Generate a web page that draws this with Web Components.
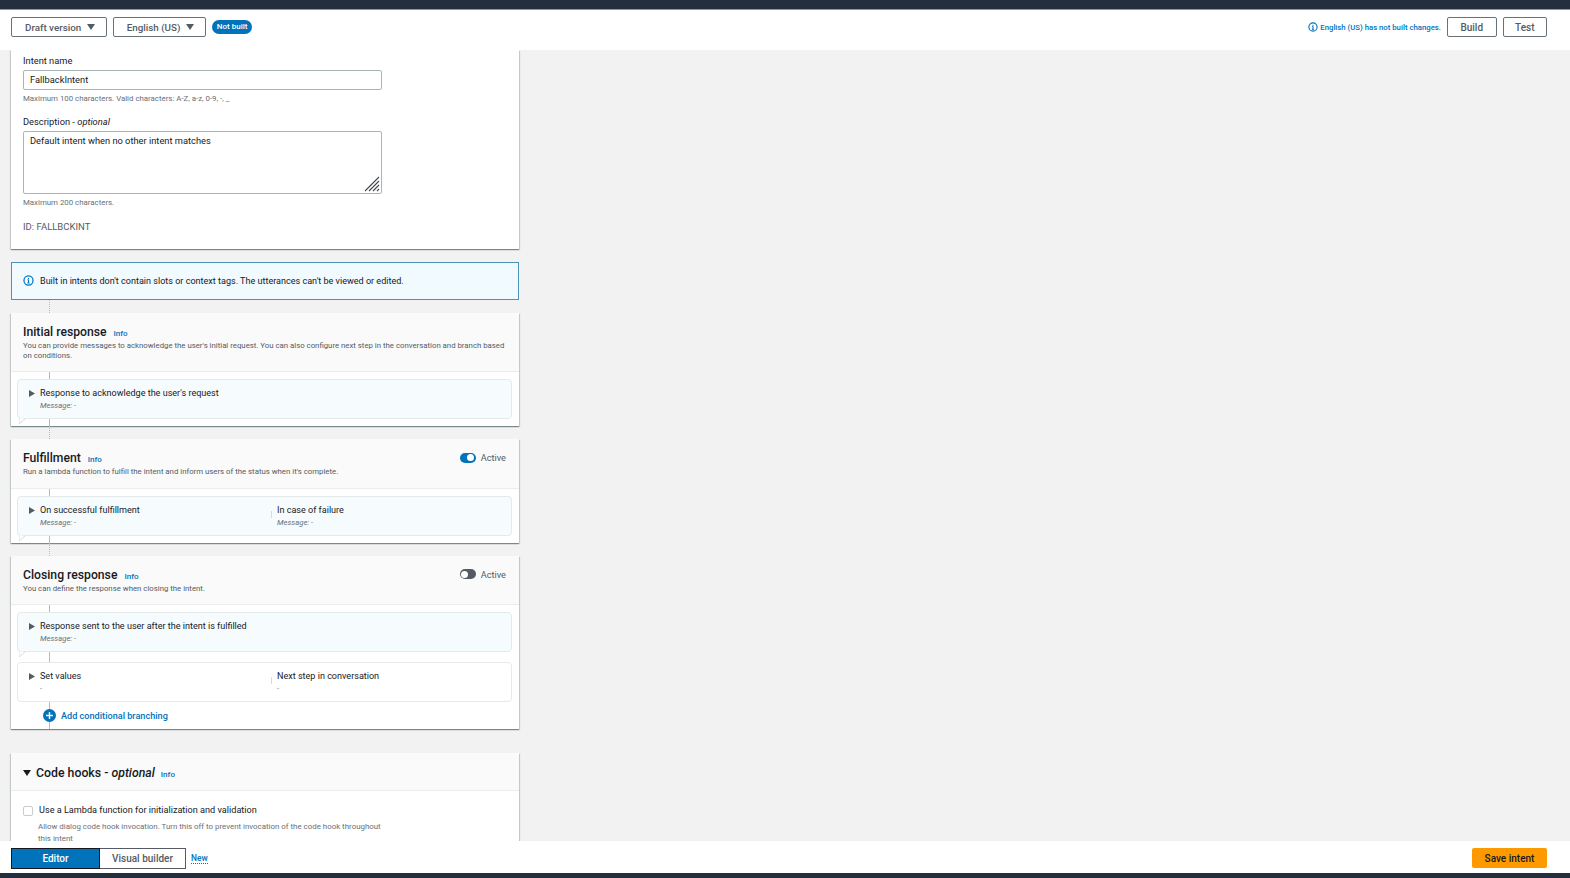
<!DOCTYPE html>
<html>
<head>
<meta charset="utf-8">
<title>FallbackIntent</title>
<style>
html, body { margin: 0; height: 100%; overflow: hidden; }
body { font-family: Roboto, "Liberation Sans", sans-serif; font-size: 9.1px; color: #16191f; }
</style>
</head>
<body>

<intent-page>
    <top-bar slot="top">
        <drop-btn slot="left">Draft version</drop-btn>
        <drop-btn slot="left">English (US)</drop-btn>
        <status-badge slot="left">Not built</status-badge>
        <info-note slot="right">English (US) has not built changes.</info-note>
        <plain-btn slot="right">Build</plain-btn>
        <plain-btn slot="right">Test</plain-btn>
    </top-bar>

    <name-card>
        <text-field label="Intent name" value="FallbackIntent" hint="Maximum 100 characters. Valid characters: A-Z, a-z, 0-9, -, _"></text-field>
        <text-field multi label="Description" optional value="Default intent when no other intent matches" hint="Maximum 200 characters."></text-field>
        <span slot="id">ID: FALLBCKINT</span>
    </name-card>

    <info-alert>Built in intents don't contain slots or context tags. The utterances can't be viewed or edited.</info-alert>
    <flow-link></flow-link>

    <flow-card heading="Initial response" desc="You can provide messages to acknowledge the user's initial request. You can also configure next step in the conversation and branch based on conditions.">
        <flow-step tail tinted title="Response to acknowledge the user's request" sub="Message: -"></flow-step>
    </flow-card>
    <flow-link></flow-link>

    <flow-card heading="Fulfillment" desc="Run a lambda function to fulfill the intent and inform users of the status when it's complete." toggle="on">
        <flow-step tail tinted title="On successful fulfillment" sub="Message: -" title2="In case of failure" sub2="Message: -"></flow-step>
    </flow-card>
    <flow-link></flow-link>

    <flow-card heading="Closing response" desc="You can define the response when closing the intent." toggle="off">
        <flow-step tail tinted title="Response sent to the user after the intent is fulfilled" sub="Message: -"></flow-step>
        <flow-step plain title="Set values" sub="-" title2="Next step in conversation" sub2="-"></flow-step>
        <add-branch>Add conditional branching</add-branch>
    </flow-card>

    <hooks-card></hooks-card>

    <bottom-bar slot="bottom"></bottom-bar>
</intent-page>

<script>
const INFO_ICON = `<svg viewBox="0 0 16 16" width="100%" height="100%" fill="none" stroke="currentColor"><circle cx="8" cy="8" r="6.6" stroke-width="1.8"/><path d="M8 7v4.6M6.4 11.6h3.2M6.6 7h1.6" stroke-width="1.6"/><path d="M7.2 4.2h1.6v1.6H7.2z" fill="currentColor" stroke="none"/></svg>`;

class IntentPage extends HTMLElement {
    constructor() {
        super();
        this.attachShadow({ mode: 'open' }).innerHTML = `
<style>
:host { display: flex; flex-direction: column; height: 878px; background: #f2f2f2; }
.nav { height: 9px; background: #232f3e; border-bottom: 1px solid #8d949c; flex: none; }
.main { flex: 1; min-height: 0; overflow: hidden; padding: 0 1051px 0 11px; }
.foot { height: 5px; background: #232f3e; flex: none; }
</style>
<div class="nav"></div>
<slot name="top"></slot>
<div class="main"><slot></slot></div>
<slot name="bottom"></slot>
<div class="foot"></div>`;
    }
}

class TopBar extends HTMLElement {
    constructor() {
        super();
        this.attachShadow({ mode: 'open' }).innerHTML = `
<style>
:host { display: flex; align-items: center; justify-content: space-between; box-sizing: border-box; height: 40px; flex: none; background: #fff; padding: 0 23px 6px 11px; position: relative; z-index: 1; }
.side { display: flex; align-items: center; gap: 6px; }
</style>
<div class="side"><slot name="left"></slot></div>
<div class="side"><slot name="right"></slot></div>`;
    }
}

class DropBtn extends HTMLElement {
    constructor() {
        super();
        this.attachShadow({ mode: 'open' }).innerHTML = `
<style>
:host { display: flex; align-items: center; gap: 6px; height: 18px; padding: 0 10.5px 0 13px; border: 1px solid #687078; border-radius: 2px; background: #fff; color: #545b64; font-weight: 500; font-size: 9.8px; }
svg { width: 8px; height: 6px; fill: #545b64; }
</style>
<slot></slot><svg viewBox="0 0 8 6"><path d="M0 0h8L4 6z"/></svg>`;
    }
}

class StatusBadge extends HTMLElement {
    constructor() {
        super();
        this.attachShadow({ mode: 'open' }).innerHTML = `
<style>
:host { display: block; padding: 0 5px; line-height: 14px; border-radius: 7px; background: #0073bb; color: #fff; font-size: 8px; font-weight: 500; }
</style>
<slot></slot>`;
    }
}

class InfoNote extends HTMLElement {
    constructor() {
        super();
        this.attachShadow({ mode: 'open' }).innerHTML = `
<style>
:host { display: flex; align-items: center; gap: 2px; color: #0073bb; font-size: 7.75px; font-weight: 500; }
i { width: 10px; height: 10px; display: block; }
</style>
<i>${INFO_ICON}</i><slot></slot>`;
    }
}

class PlainBtn extends HTMLElement {
    constructor() {
        super();
        this.attachShadow({ mode: 'open' }).innerHTML = `
<style>
:host { display: flex; align-items: center; justify-content: center; height: 18px; padding: 0 12.5px; border: 1px solid #687078; border-radius: 2px; color: #545b64; font-weight: 500; font-size: 10px; }
:host(:last-child) { padding: 0 11.5px; }
</style>
<slot></slot>`;
    }
}

class NameCard extends HTMLElement {
    constructor() {
        super();
        this.attachShadow({ mode: 'open' }).innerHTML = `
<style>
:host { display: block; background: #fff; height: 199px; box-sizing: border-box; padding: 5px 137px 0 12px; box-shadow: 0 1px 1px rgba(0,28,36,.3), 1px 1px 1px rgba(0,28,36,.15), -1px 1px 1px rgba(0,28,36,.15); }
.id { color: #545b64; font-size: 9.5px; line-height: 14px; }
</style>
<slot></slot>
<div class="id"><slot name="id"></slot></div>`;
    }
}

class TextField extends HTMLElement {
    connectedCallback() {
        const multi = this.hasAttribute('multi');
        const opt = this.hasAttribute('optional') ? ' - <em>optional</em>' : '';
        const grip = multi ? `<svg class="grip" viewBox="0 0 16 16" stroke="#414750" stroke-width="1.1"><path d="M1 15 15 1M5 15 15 5M9 15l6-6M13 15l2-2"/></svg>` : '';
        this.attachShadow({ mode: 'open' }).innerHTML = `
<style>
:host { display: block; margin-bottom: 12px; }
.label { line-height: 12px; margin-bottom: 3px; color: #16191f; font-size: 9.3px; }
.box { position: relative; box-sizing: border-box; height: ${multi ? 63 : 20}px; border: 1px solid #aab7b8; border-radius: 2px; padding: ${multi ? 3 : 0}px 6px; line-height: ${multi ? 12 : 18}px; background: #fff; font-size: 9.3px; }
.hint { margin-top: 3px; color: #687078; font-size: 7.85px; line-height: 11px; }
.grip { position: absolute; right: 1px; bottom: 1px; width: 16px; height: 16px; }
</style>
<div class="label">${this.getAttribute('label')}${opt}</div>
<div class="box">${this.getAttribute('value')}${grip}</div>
<div class="hint">${this.getAttribute('hint')}</div>`;
    }
}

class InfoAlert extends HTMLElement {
    constructor() {
        super();
        this.attachShadow({ mode: 'open' }).innerHTML = `
<style>
:host { display: flex; align-items: center; gap: 6px; box-sizing: border-box; height: 38px; margin-top: 13px; padding: 0 11px 1px; background: #f1faff; border: 1px solid #4a94b8; color: #16191f; font-size: 9.05px; }
i { width: 11px; height: 11px; display: block; color: #0073bb; flex: none; }
</style>
<i>${INFO_ICON}</i><span><slot></slot></span>`;
    }
}

class FlowLink extends HTMLElement {
    constructor() {
        super();
        this.attachShadow({ mode: 'open' }).innerHTML = `
<style>
:host { display: block; height: 13px; margin-left: 38px; border-left: 1px dotted #7fd0dc; }
</style>`;
    }
}

class FlowCard extends HTMLElement {
    connectedCallback() {
        const toggle = this.getAttribute('toggle');
        this.attachShadow({ mode: 'open' }).innerHTML = `
<style>
:host { display: block; background: #fff; box-shadow: 0 1px 1px rgba(0,28,36,.3), 1px 1px 1px rgba(0,28,36,.15), -1px 1px 1px rgba(0,28,36,.15); }
header { background: #fafafa; border-bottom: 1px solid #eaeded; padding: 11px 12px 11px 12px; position: relative; }
h2 { margin: 0; display: flex; align-items: baseline; gap: 7px; font-size: 12.2px; line-height: 17px; font-weight: 500; color: #16191f; }
h2 a { color: #0073bb; font-size: 8px; font-weight: 500; line-height: 1; }
p { margin: 0; color: #545b64; font-size: 7.8px; line-height: 9.5px; }
.toggle { position: absolute; top: 13px; right: 13px; }
.body { padding: 7px 7px 7px 6px; display: flex; flex-direction: column; gap: 10px; position: relative; }
.line { position: absolute; left: 38px; top: 0; bottom: 0; width: 1px; background: #7fd0dc; }
::slotted(*) { position: relative; }
</style>
<header>
    <h2>${this.getAttribute('heading')} <a>Info</a></h2>
    <p>${this.getAttribute('desc')}</p>
    ${toggle ? `<active-switch class="toggle" state="${toggle}"></active-switch>` : ''}
</header>
<div class="body"><div class="line"></div><slot></slot></div>`;
    }
}

class ActiveSwitch extends HTMLElement {
    connectedCallback() {
        const on = this.getAttribute('state') === 'on';
        this.attachShadow({ mode: 'open' }).innerHTML = `
<style>
:host { display: flex; align-items: center; gap: 5px; font-size: 9.2px; color: #545b64; }
.track { width: 16px; height: 10px; border-radius: 5px; background: ${on ? '#0073bb' : '#545b64'}; position: relative; display: block; }
.knob { position: absolute; top: 1.5px; ${on ? 'right' : 'left'}: 1.5px; width: 7px; height: 7px; border-radius: 50%; background: #fff; }
</style>
<span class="track"><span class="knob"></span></span><span>Active</span>`;
    }
}

class FlowStep extends HTMLElement {
    connectedCallback() {
        const a = this.getAttribute('title');
        const b = this.getAttribute('title2');
        const tail = this.hasAttribute('tail') ? '<svg class="tail" viewBox="0 0 8 6"><path d="M0 0v6l6-5" fill="#fff" stroke="#d5dbdb"/></svg>' : '';
        const col2 = b ? `<div class="col two"><div class="t">${b}</div><div class="s">${this.getAttribute('sub2')}</div></div>` : '';
        const plain = this.hasAttribute('plain');
        this.attachShadow({ mode: 'open' }).innerHTML = `
<style>
:host { display: block; }
.box { position: relative; display: flex; box-sizing: border-box; height: 40px; padding: 7px 0 0 11px; border: 1px solid #e4e9ea; border-radius: 4px; background: ${plain ? '#fff' : '#f6fbfe'}; }
.arrow { width: 6px; height: 7px; margin: 3px 5px 0 0; fill: #545b64; flex: none; }
.col { width: 230px; flex: none; }
.col.two { margin-left: 7px; position: relative; }
.col.two::before { content: ""; position: absolute; left: -6px; top: 7px; height: 7px; border-left: 1px solid #d5dbdb; }
.t { font-size: 9.05px; line-height: 13px; color: #16191f; }
.s { font-size: 7.7px; line-height: 12px; color: #687078; font-style: italic; }
.tail { position: absolute; left: 1px; bottom: -6px; width: 8px; height: 6px; }
</style>
<div class="box">
    <svg class="arrow" viewBox="0 0 6 7"><path d="M0 0l6 3.5L0 7z"/></svg>
    <div class="col"><div class="t">${a}</div><div class="s">${this.getAttribute('sub')}</div></div>
    ${col2}
    ${tail}
</div>`;
    }
}

class AddBranch extends HTMLElement {
    constructor() {
        super();
        this.attachShadow({ mode: 'open' }).innerHTML = `
<style>
:host { display: flex; align-items: center; gap: 5px; margin: -3px 0 0 26px; height: 13px; color: #0073bb; font-weight: 500; font-size: 9.15px; }
svg { width: 13px; height: 13px; flex: none; }
</style>
<svg viewBox="0 0 13 13"><circle cx="6.5" cy="6.5" r="6.5" fill="#0073bb"/><path d="M6.5 3v7M3 6.5h7" stroke="#fff" stroke-width="1.4"/></svg><span><slot></slot></span>`;
    }
}

class HooksCard extends HTMLElement {
    constructor() {
        super();
        this.attachShadow({ mode: 'open' }).innerHTML = `
<style>
:host { display: block; margin-top: 24px; background: #fff; box-shadow: 0 1px 1px rgba(0,28,36,.3), 1px 1px 1px rgba(0,28,36,.15), -1px 1px 1px rgba(0,28,36,.15); height: 120px; }
header { display: flex; align-items: center; box-sizing: border-box; height: 38px; padding: 2px 12px 0; background: #fafafa; border-bottom: 1px solid #eaeded; }
svg.caret { width: 8px; height: 6px; fill: #16191f; margin-right: 5px; }
h2 { margin: 0; font-size: 12.3px; font-weight: 500; }
h2 a { color: #0073bb; font-size: 8px; margin-left: 3px; }
.row { display: flex; align-items: center; gap: 6px; margin: 13px 0 0 12px; line-height: 13px; font-size: 9.15px; }
.box { width: 8px; height: 8px; border: 1px solid #c6cdd1; border-radius: 2px; flex: none; }
.help { margin: 4px 0 0 27px; width: 345px; color: #687078; font-size: 7.9px; line-height: 12px; }
</style>
<header>
    <svg class="caret" viewBox="0 0 8 6"><path d="M0 0h8L4 6z"/></svg>
    <h2>Code hooks - <em>optional</em> <a>Info</a></h2>
</header>
<div class="row"><span class="box"></span><span>Use a Lambda function for initialization and validation</span></div>
<div class="help">Allow dialog code hook invocation. Turn this off to prevent invocation of the code hook throughout this intent</div>`;
    }
}

class BottomBar extends HTMLElement {
    constructor() {
        super();
        this.attachShadow({ mode: 'open' }).innerHTML = `
<style>
:host { display: flex; align-items: center; box-sizing: border-box; height: 32px; flex: none; padding: 2px 23px 0 11px; background: #fff; position: relative; z-index: 1; }
.tab { display: flex; align-items: center; justify-content: center; box-sizing: border-box; height: 21px; font-weight: 500; font-size: 10px; border: 1px solid #545b64; }
.on { width: 89px; background: #0073bb; color: #fff; border-color: #16191f; }
.off { width: 86px; color: #545b64; border-left: 0; }
.new { margin: 2px 0 0 5px; color: #0073bb; font-size: 8.4px; font-weight: 500; border-bottom: 1px dotted #0073bb; line-height: 9px; }
.save { margin-left: auto; display: flex; align-items: center; justify-content: center; width: 75px; height: 20px; background: #ff9900; color: #16191f; font-weight: 500; font-size: 10px; border-radius: 2px; }
</style>
<div class="tab on">Editor</div><div class="tab off">Visual builder</div><span class="new">New</span>
<div class="save">Save intent</div>`;
    }
}

customElements.define('intent-page', IntentPage);
customElements.define('top-bar', TopBar);
customElements.define('drop-btn', DropBtn);
customElements.define('status-badge', StatusBadge);
customElements.define('info-note', InfoNote);
customElements.define('plain-btn', PlainBtn);
customElements.define('name-card', NameCard);
customElements.define('text-field', TextField);
customElements.define('info-alert', InfoAlert);
customElements.define('flow-link', FlowLink);
customElements.define('flow-card', FlowCard);
customElements.define('active-switch', ActiveSwitch);
customElements.define('flow-step', FlowStep);
customElements.define('add-branch', AddBranch);
customElements.define('hooks-card', HooksCard);
customElements.define('bottom-bar', BottomBar);
</script>
</body>
</html>
